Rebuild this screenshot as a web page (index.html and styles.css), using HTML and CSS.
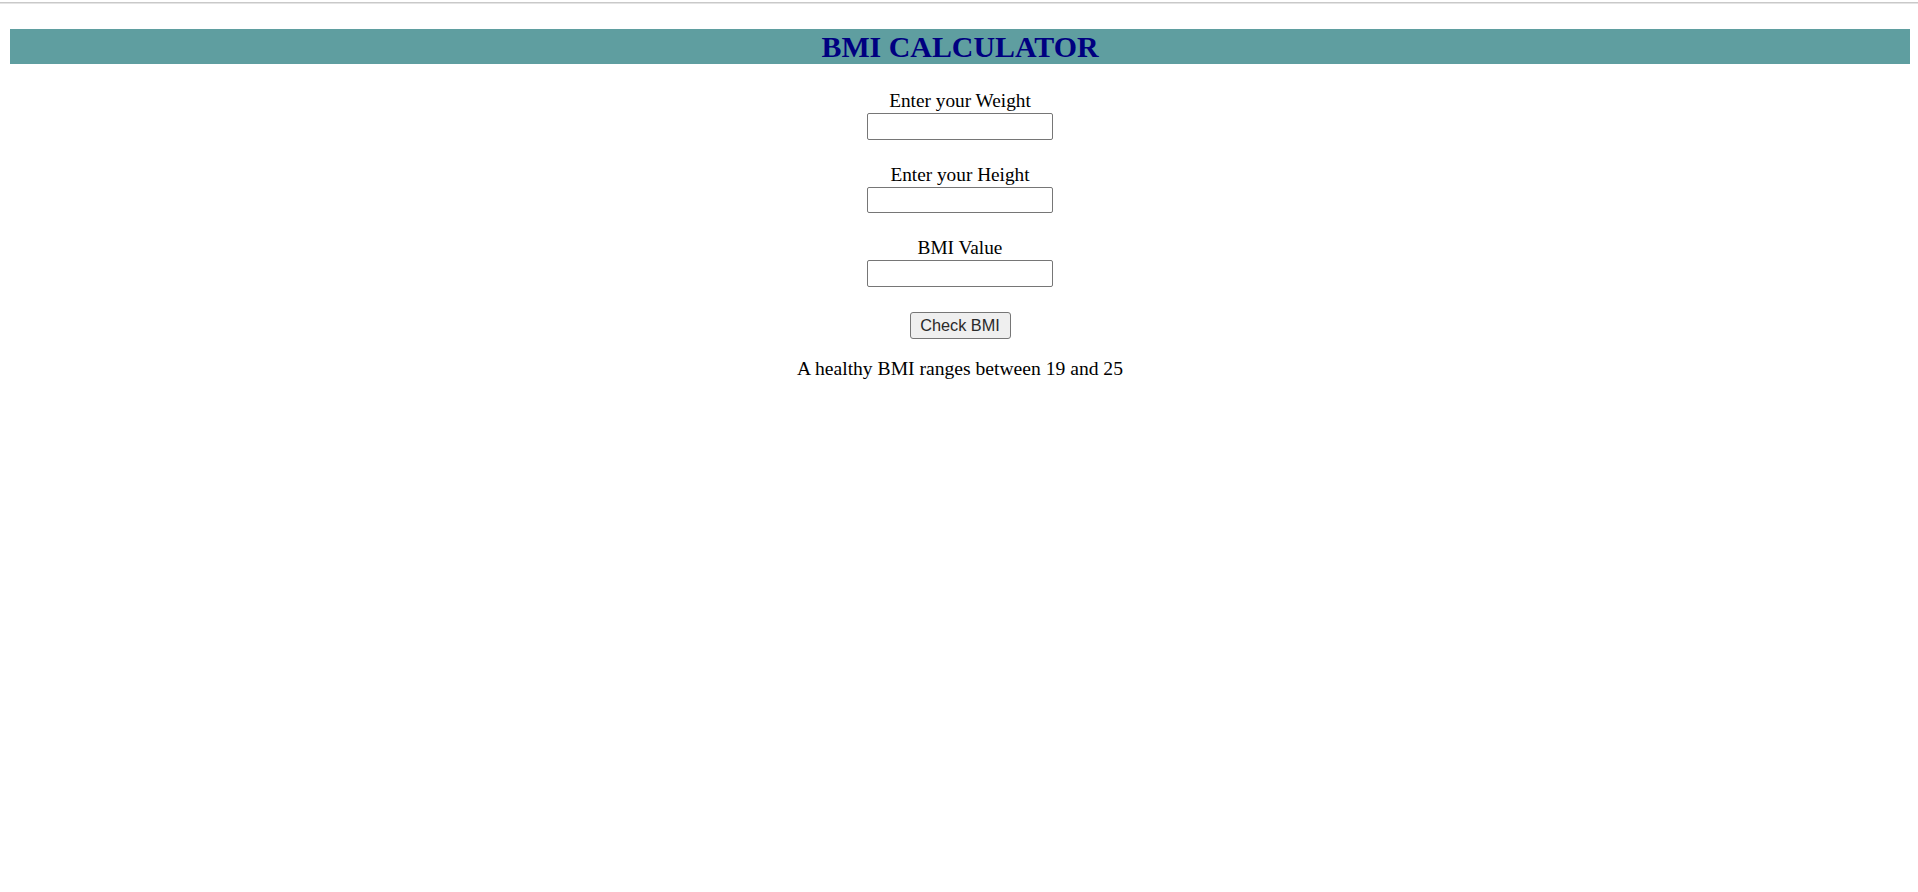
FILE: index.html
```html
<!DOCTYPE html>
<html lang="en">
<head>
<meta charset="utf-8">
<title>BMI Calculator</title>
<link rel="stylesheet" href="styles.css">
</head>
<body>
<div class="topline"></div>
<main class="page">
  <h2 class="title">BMI CALCULATOR</h2>
  <form class="form">
    <div class="field">
      <label class="label" for="w">Enter your Weight</label>
      <input class="box" id="w" type="text">
    </div>
    <div class="field">
      <label class="label" for="h">Enter your Height</label>
      <input class="box" id="h" type="text">
    </div>
    <div class="field">
      <label class="label" for="b">BMI Value</label>
      <input class="box" id="b" type="text">
    </div>
    <button class="btn" type="button">Check BMI</button>
    <p class="note">A healthy BMI ranges between 19 and 25</p>
  </form>
</main>
</body>
</html>
```
FILE: styles.css
```css
html, body {
  margin: 0;
  padding: 0;
  background: #ffffff;
}
body {
  font-family: "Liberation Serif", "Times New Roman", serif;
  color: #000;
}
.topline {
  margin-top: 2px;
  height: 1px;
  background: #c9c9c9;
  border-bottom: 1px solid #e4e4e4;
}
.page {
  padding: 25px 8px 0 10px;
}
.title {
  margin: 0;
  height: 35px;
  line-height: 35px;
  background: #5f9ea0;
  color: #000080;
  font-size: 29.9px;
  font-weight: bold;
  text-align: center;
}
.form {
  margin-top: 25px;
  display: flex;
  flex-direction: column;
  align-items: center;
}
.field {
  display: flex;
  flex-direction: column;
  align-items: center;
  margin-bottom: 23px;
}
.label {
  display: block;
  height: 24px;
  line-height: 24px;
  font-size: 19.3px;
}
.box {
  box-sizing: border-box;
  width: 186px;
  height: 26.5px;
  margin: 0;
  padding: 0 3px;
  border: 1px solid #767676;
  border-radius: 2px;
  background: #fff;
  font-family: "Liberation Sans", Arial, sans-serif;
  font-size: 16px;
}
.btn {
  box-sizing: border-box;
  margin-top: 2px;
  height: 27px;
  width: 101px;
  padding: 0;
  border: 1px solid #767676;
  border-radius: 3px;
  background: #efefef;
  color: #2a2a2a;
  font-family: "Liberation Sans", Arial, sans-serif;
  font-size: 16.3px;
  font-weight: normal;
  line-height: 25px;
}
.note {
  margin: 19px 0 0;
  height: 22px;
  line-height: 22px;
  font-size: 19.6px;
}
```
